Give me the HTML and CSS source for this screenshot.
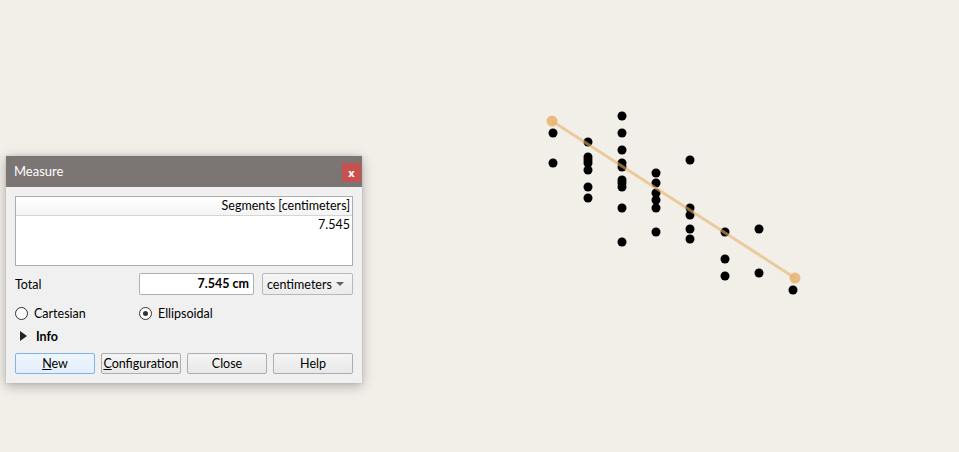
FILE: index.html
```html
<!DOCTYPE html>
<html>
<head>
<meta charset="utf-8">
<link rel="stylesheet" href="styles.css">
</head>
<body>
<div class="canvas">
  <svg class="map" width="959" height="452" viewBox="0 0 959 452">
    <g fill="#000">
      <circle cx="553" cy="133" r="4.5"/>
      <circle cx="553" cy="163" r="4.5"/>
      <circle cx="588" cy="142" r="4.5"/>
      <circle cx="588" cy="157" r="4.5"/>
      <circle cx="588" cy="160" r="4.5"/>
      <circle cx="588" cy="163" r="4.5"/>
      <circle cx="588" cy="170" r="4.5"/>
      <circle cx="588" cy="187" r="4.5"/>
      <circle cx="588" cy="198" r="4.5"/>
      <circle cx="622" cy="116" r="4.5"/>
      <circle cx="622" cy="133" r="4.5"/>
      <circle cx="622" cy="150" r="4.5"/>
      <circle cx="622" cy="163" r="4.5"/>
      <circle cx="622" cy="167" r="4.5"/>
      <circle cx="622" cy="180" r="4.5"/>
      <circle cx="622" cy="183" r="4.5"/>
      <circle cx="622" cy="187" r="4.5"/>
      <circle cx="622" cy="208" r="4.5"/>
      <circle cx="622" cy="242" r="4.5"/>
      <circle cx="656" cy="173" r="4.5"/>
      <circle cx="656" cy="183" r="4.5"/>
      <circle cx="656" cy="193" r="4.5"/>
      <circle cx="656" cy="200" r="4.5"/>
      <circle cx="656" cy="208" r="4.5"/>
      <circle cx="656" cy="232" r="4.5"/>
      <circle cx="690" cy="160" r="4.5"/>
      <circle cx="690" cy="208" r="4.5"/>
      <circle cx="690" cy="215" r="4.5"/>
      <circle cx="690" cy="229" r="4.5"/>
      <circle cx="690" cy="239" r="4.5"/>
      <circle cx="725" cy="232" r="4.5"/>
      <circle cx="725" cy="259" r="4.5"/>
      <circle cx="725" cy="276" r="4.5"/>
      <circle cx="759" cy="229" r="4.5"/>
      <circle cx="759" cy="273" r="4.5"/>
      <circle cx="793" cy="290" r="4.5"/>
    </g>
    <line x1="552" y1="121" x2="795" y2="278" stroke="#e6b06a" stroke-opacity="0.6" stroke-width="3"/>
    <circle cx="552" cy="121" r="5.5" fill="#e8b36f" fill-opacity="0.85"/>
    <circle cx="795" cy="278" r="5.5" fill="#e8b36f" fill-opacity="0.85"/>
  </svg>

  <div class="dialog">
    <div class="titlebar">
      <span class="title">Measure</span>
      <span class="close">x</span>
    </div>
    <div class="body">
      <div class="table">
        <div class="thead">Segments [centimeters]</div>
        <div class="trow">7.545</div>
      </div>
      <div class="total-row">
        <span class="label">Total</span>
        <div class="totalbox">7.545 cm</div>
        <div class="combo"><span>centimeters</span><span class="arrow"></span></div>
      </div>
      <div class="radio-row">
        <label class="radio"><span class="circle"></span>Cartesian</label>
        <label class="radio"><span class="circle checked"></span>Ellipsoidal</label>
      </div>
      <div class="info-row">
        <span class="tri"></span><span class="info">Info</span>
      </div>
      <div class="buttons">
        <button class="btn default"><u>N</u>ew</button>
        <button class="btn"><u>C</u>onfiguration</button>
        <button class="btn">Close</button>
        <button class="btn">Help</button>
      </div>
    </div>
  </div>
</div>
</body>
</html>
```

FILE: styles.css
```css
html, body {
  margin: 0;
  padding: 0;
}
body {
  width: 959px;
  height: 452px;
  overflow: hidden;
  background: #f2efe9;
  font-family: "Lato", "Noto Sans", sans-serif;
  font-size: 12.5px;
  color: #000;
}
.canvas {
  position: relative;
  width: 959px;
  height: 452px;
}
.map {
  position: absolute;
  left: 0;
  top: 0;
}
.dialog {
  position: absolute;
  left: 6px;
  top: 156px;
  width: 356px;
  height: 227px;
  background: #f0f0f0;
  box-shadow: 0 3px 12px rgba(0,0,0,0.28), 0 0 3px rgba(0,0,0,0.12);
  display: flex;
  flex-direction: column;
}
.titlebar {
  height: 31px;
  background: #7b7574;
  display: flex;
  align-items: center;
  justify-content: space-between;
  padding-left: 8px;
  padding-right: 1px;
  box-sizing: border-box;
}
.title {
  color: #fff;
  font-size: 13px;
  margin-top: -2px;
}
.close {
  width: 19px;
  height: 19px;
  background: #c75050;
  color: #fff;
  font-weight: bold;
  font-size: 11px;
  font-family: "Noto Sans", sans-serif;
  display: flex;
  align-items: center;
  justify-content: center;
  line-height: 1;
  margin-top: 2px;
  padding-bottom: 1px;
  box-sizing: border-box;
}
.body {
  padding: 9px 9px 0 9px;
  display: flex;
  flex-direction: column;
}
.table {
  height: 70px;
  border: 1px solid #acacac;
  background: #fff;
  box-sizing: border-box;
}
.thead {
  height: 18px;
  text-align: right;
  padding-right: 2px;
  line-height: 18px;
  background: linear-gradient(#ffffff, #f4f4f4);
  border-bottom: 1px solid #d5d5d5;
}
.trow {
  text-align: right;
  padding-right: 2px;
  line-height: 17px;
}
.total-row {
  margin-top: 7px;
  height: 22px;
  display: flex;
  align-items: center;
}
.label {
  width: 124px;
}
.totalbox {
  width: 115px;
  height: 22px;
  box-sizing: border-box;
  border: 1px solid #b0b0b0;
  border-radius: 2px;
  background: #fff;
  text-align: right;
  font-weight: bold;
  padding-right: 4px;
  line-height: 20px;
}
.combo {
  margin-left: 8px;
  width: 91px;
  height: 22px;
  box-sizing: border-box;
  border: 1px solid #b8b8b8;
  border-radius: 2px;
  background: linear-gradient(#f6f6f6, #ececec);
  display: flex;
  align-items: center;
  justify-content: space-between;
  padding: 0 8px 0 4px;
}
.arrow {
  width: 0;
  height: 0;
  border-left: 4px solid transparent;
  border-right: 4px solid transparent;
  border-top: 4px solid #606060;
}
.radio-row {
  margin-top: 10px;
  height: 16px;
  display: flex;
  align-items: center;
}
.radio {
  display: flex;
  align-items: center;
  width: 124px;
}
.circle {
  width: 13px;
  height: 13px;
  box-sizing: border-box;
  border: 1px solid #333;
  border-radius: 50%;
  background: #fff;
  margin-right: 6px;
  display: flex;
  align-items: center;
  justify-content: center;
}
.circle.checked::after {
  content: "";
  width: 5px;
  height: 5px;
  border-radius: 50%;
  background: #333;
}
.info-row {
  margin-top: 7px;
  height: 16px;
  display: flex;
  align-items: center;
  padding-left: 5px;
}
.tri {
  width: 0;
  height: 0;
  border-top: 5px solid transparent;
  border-bottom: 5px solid transparent;
  border-left: 7px solid #222;
  margin-right: 9px;
}
.info {
  font-weight: bold;
}
.buttons {
  margin-top: 9px;
  display: flex;
  gap: 6px;
}
.btn {
  width: 80px;
  height: 21px;
  padding: 0;
  font-family: inherit;
  font-size: 12.5px;
  color: #000;
  border: 1px solid #adadad;
  border-radius: 2px;
  background: linear-gradient(#f4f4f4, #e8e8e8);
  line-height: 19px;
}
.btn.default {
  border-color: #7eb4ea;
  background: linear-gradient(#eef6fd, #e3eefa);
}
```
